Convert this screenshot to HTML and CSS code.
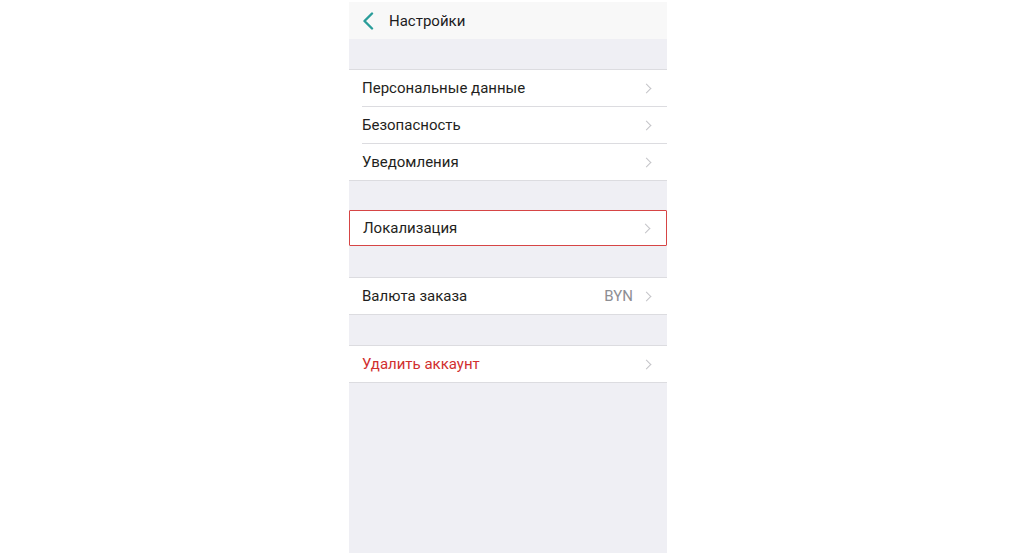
FILE: index.html
```html
<!DOCTYPE html>
<html lang="ru">
<head>
    <meta charset="UTF-8">
    <meta name="viewport" content="width=device-width, initial-scale=1.0">
    <title>Настройки</title>
    <link rel="stylesheet" href="styles.css">
</head>
<body>
    <div class="screen">
        <div class="navbar">
            <span class="back">
                <svg width="12" height="18" viewBox="0 0 12 18"><path d="M10 1.5 L2.5 9 L10 16.5" fill="none" stroke="#2a9d9a" stroke-width="2.4" stroke-linecap="round" stroke-linejoin="round"/></svg>
            </span>
            <span class="title">Настройки</span>
        </div>

        <div class="spacer"></div>

        <div class="group">
            <div class="row">
                <span class="label">Персональные данные</span>
                <span class="chevron"></span>
            </div>
            <div class="row">
                <span class="label">Безопасность</span>
                <span class="chevron"></span>
            </div>
            <div class="row">
                <span class="label">Уведомления</span>
                <span class="chevron"></span>
            </div>
        </div>

        <div class="spacer spacer-sm"></div>

        <div class="group group-selected">
            <div class="row">
                <span class="label">Локализация</span>
                <span class="chevron"></span>
            </div>
        </div>

        <div class="spacer spacer-lg"></div>

        <div class="group">
            <div class="row">
                <span class="label">Валюта заказа</span>
                <span class="value">BYN</span>
                <span class="chevron"></span>
            </div>
        </div>

        <div class="spacer"></div>

        <div class="group">
            <div class="row">
                <span class="label danger">Удалить аккаунт</span>
                <span class="chevron"></span>
            </div>
        </div>

        <div class="filler"></div>
    </div>
</body>
</html>
```

FILE: styles.css
```css
* {
    margin: 0;
    padding: 0;
    box-sizing: border-box;
}

html, body {
    height: 100%;
}

body {
    font-family: Roboto, "Liberation Sans", sans-serif;
    background: #ffffff;
    padding-top: 2px;
}

.screen {
    width: 318px;
    height: 100%;
    margin: 0 auto;
    background: #efeff4;
    display: flex;
    flex-direction: column;
}

.navbar {
    height: 37px;
    background: #f8f8f8;
    display: flex;
    align-items: center;
    padding-left: 13px;
    flex-shrink: 0;
}

.back {
    display: flex;
    width: 27px;
}

.title {
    font-size: 15px;
    color: #1c1c1e;
}

.spacer {
    height: 30px;
    flex-shrink: 0;
}

.spacer-sm {
    height: 29px;
}

.spacer-lg {
    height: 31px;
}

.group {
    background: #ffffff;
    border-top: 1px solid #dcdce0;
    border-bottom: 1px solid #dcdce0;
    flex-shrink: 0;
}

.row {
    height: 36px;
    display: flex;
    align-items: center;
    padding: 0 14px 0 13px;
    position: relative;
}

.row + .row {
    border-top: 1px solid #dcdce0;
    height: 37px;
}

.row + .row::before {
    content: "";
    position: absolute;
    left: 0;
    top: -1px;
    width: 13px;
    height: 1px;
    background: #ffffff;
}

.label {
    flex: 1;
    font-size: 15px;
    color: #1f1f21;
}

.label.danger {
    color: #d12f2f;
}

.value {
    font-size: 15px;
    color: #8e8e93;
    margin-right: 10px;
}

.chevron {
    width: 7px;
    height: 7px;
    border-top: 1.5px solid #c4c4c8;
    border-right: 1.5px solid #c4c4c8;
    transform: rotate(45deg);
    margin-right: 3px;
}

.group-selected {
    border: 1px solid #d64545;
    border-radius: 1px;
}

.group-selected .row {
    height: 34px;
}

.filler {
    flex: 1;
}
```
